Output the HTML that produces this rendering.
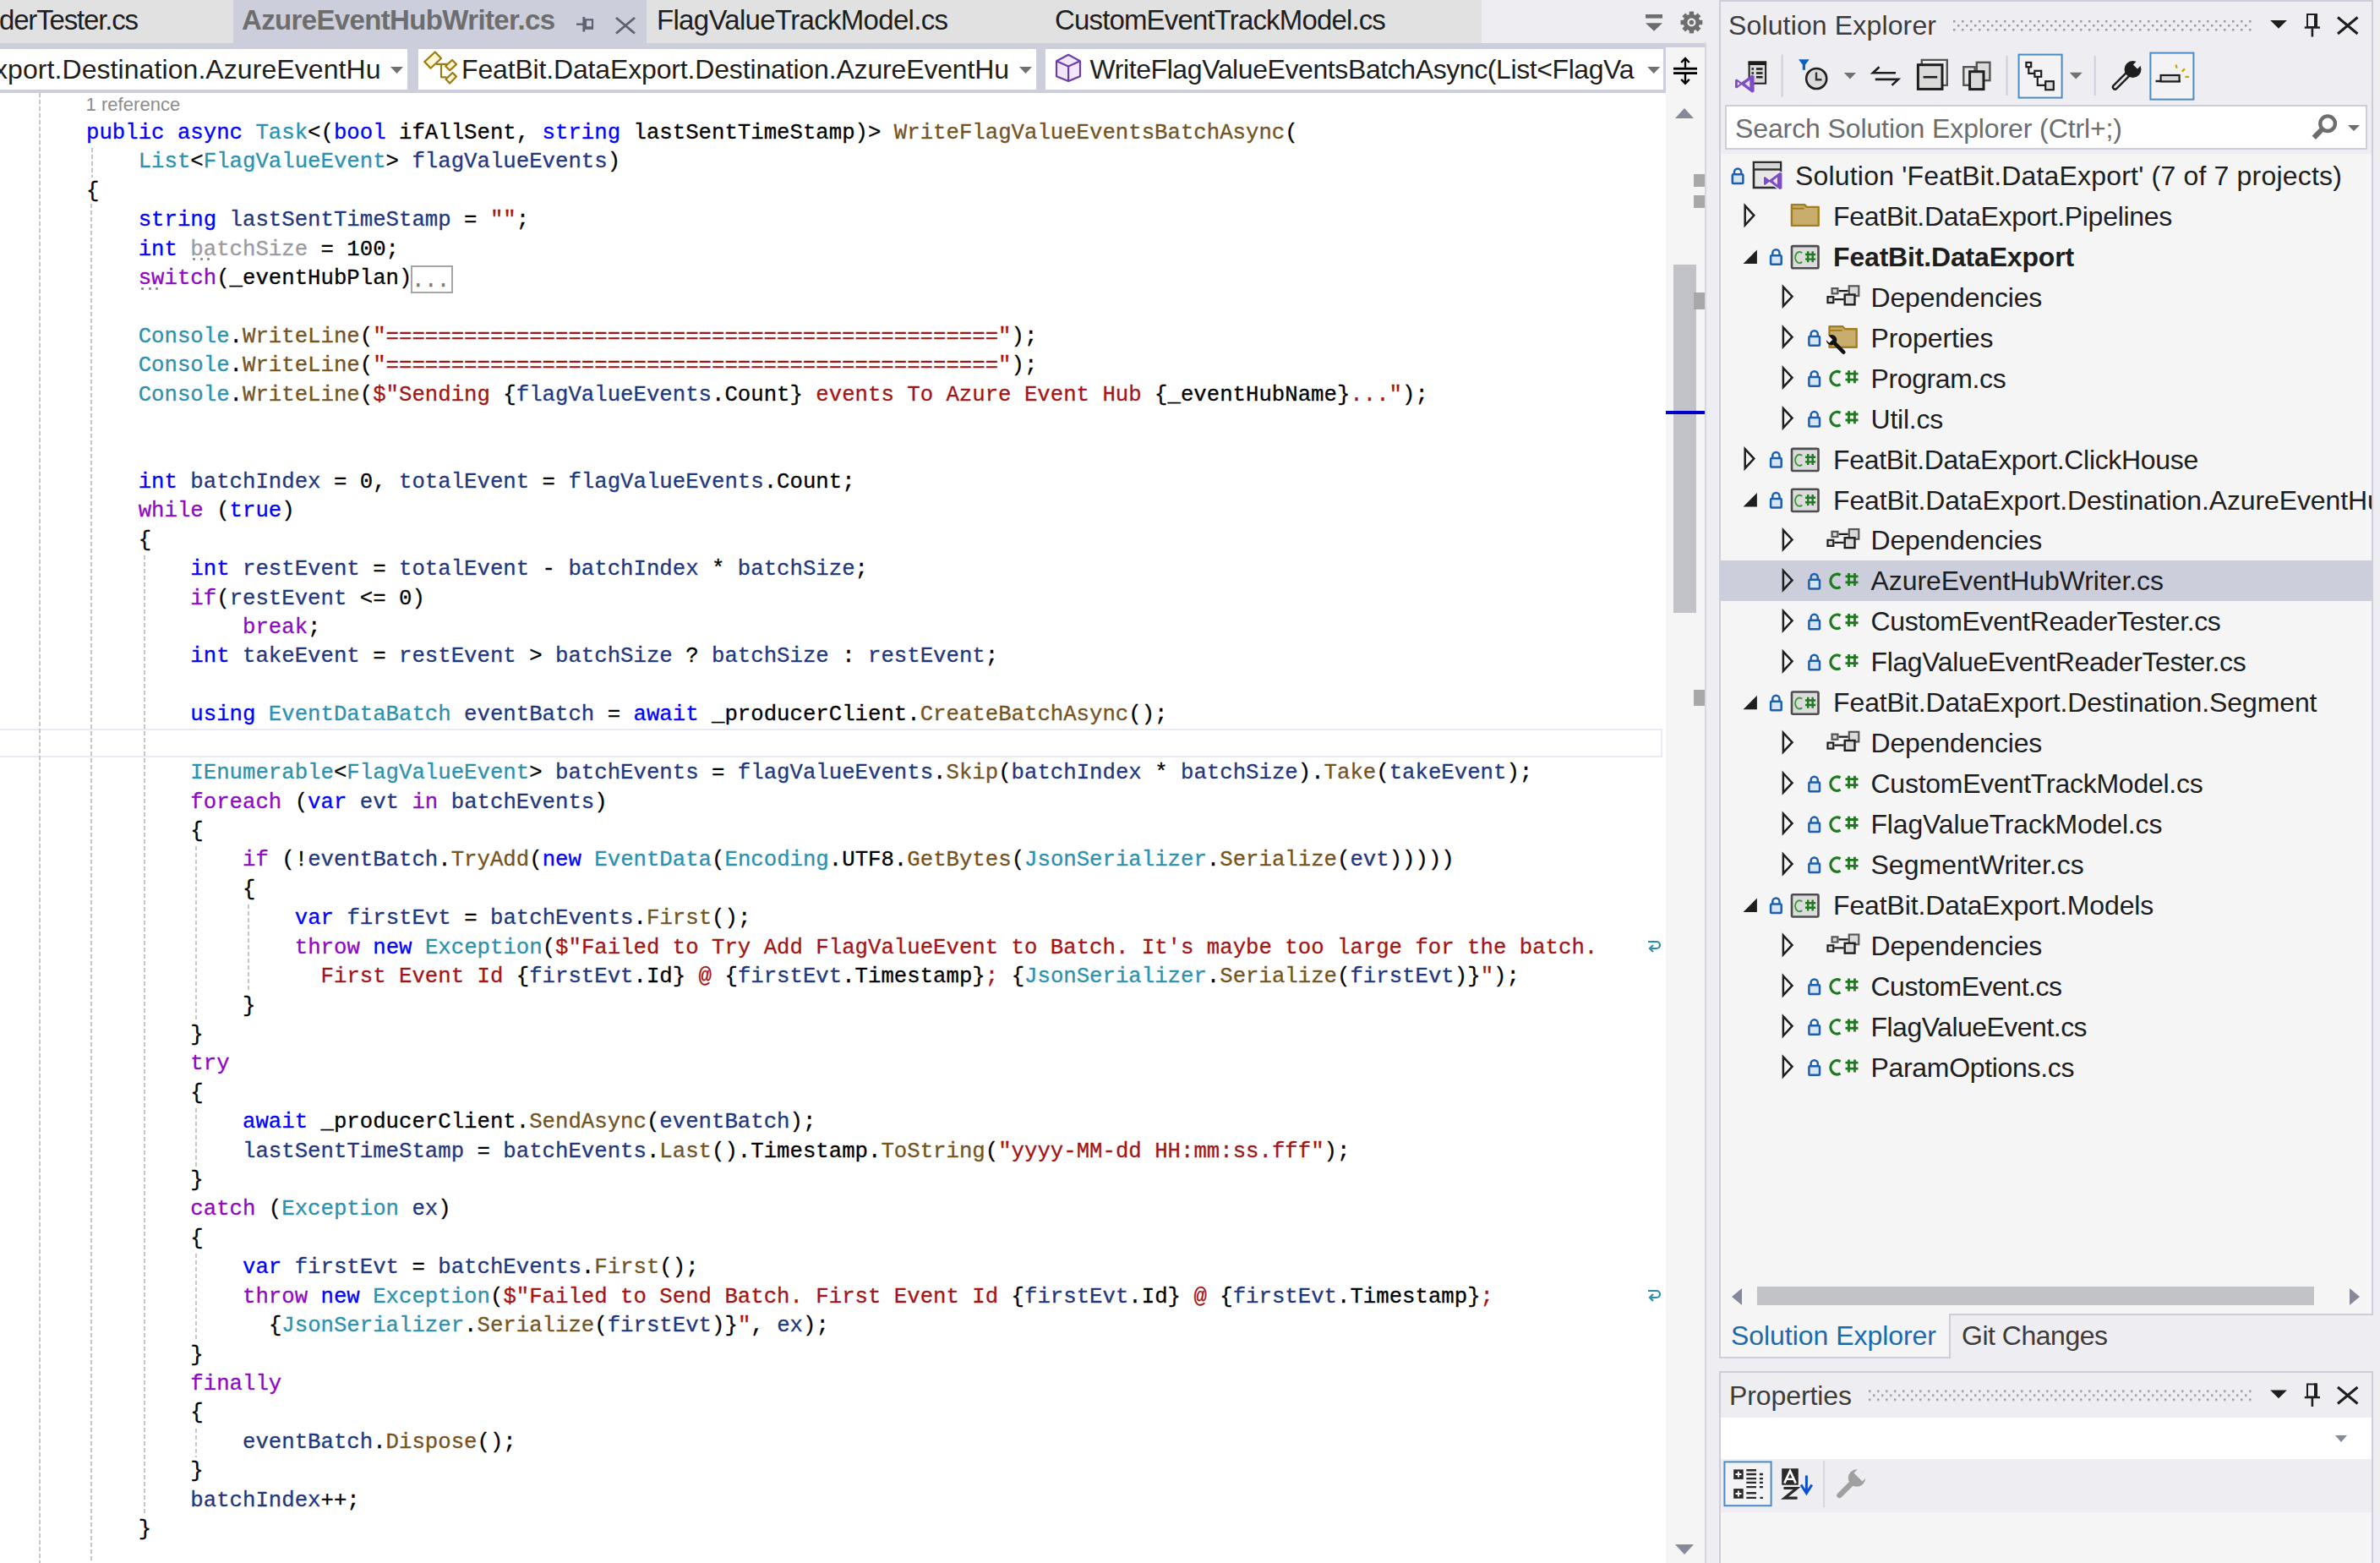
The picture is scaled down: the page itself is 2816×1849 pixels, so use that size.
<!DOCTYPE html><html><head><meta charset="utf-8"><style>
*{margin:0;padding:0;box-sizing:border-box}
html,body{width:2816px;height:1849px;overflow:hidden;background:#EEEEF2;font-family:"Liberation Sans",sans-serif;position:relative}
div,svg{position:absolute}
.t{white-space:pre;font-family:"Liberation Sans",sans-serif}
.code{font-family:"Liberation Mono",monospace;font-size:25.7px;line-height:34px;white-space:pre;-webkit-text-stroke:0.3px currentColor}
.k{color:#0000FF}.c{color:#8F08C4}.t2{color:#2B91AF}.m{color:#74531F}.v{color:#1F377F}.s{color:#A31515}.p{color:#000000}.g{color:#9A9AA2}
</style></head><body><div style="left:0px;top:0px;width:276px;height:50.5px;background:#E1E1E1;"></div>
<div style="left:276px;top:0px;width:489px;height:50.5px;background:#CCCEDB;"></div>
<div style="left:765px;top:0px;width:988px;height:50.5px;background:#E1E1E1;"></div>
<div style="left:0px;top:50.5px;width:2017px;height:59.5px;background:#CCCEDB;"></div>
<div class="t" style="left:-1px;top:3.66px;font-size:33px;line-height:40px;color:#1E1E1E;font-weight:normal;letter-spacing:-1.173px;">derTester.cs</div>
<div class="t" style="left:286px;top:3.66px;font-size:33px;line-height:40px;color:#6D6D6D;font-weight:bold;letter-spacing:-0.643px;">AzureEventHubWriter.cs</div>
<div class="t" style="left:777px;top:3.66px;font-size:33px;line-height:40px;color:#1E1E1E;font-weight:normal;letter-spacing:-0.689px;">FlagValueTrackModel.cs</div>
<div class="t" style="left:1248px;top:3.66px;font-size:33px;line-height:40px;color:#1E1E1E;font-weight:normal;letter-spacing:-0.85px;">CustomEventTrackModel.cs</div>
<div style="left:0px;top:57.5px;width:482px;height:48.5px;background:#FFFFFF;"></div>
<div style="left:495px;top:57.5px;width:731px;height:48.5px;background:#FFFFFF;"></div>
<div style="left:1237px;top:57.5px;width:731px;height:48.5px;background:#FFFFFF;"></div>
<div style="left:1971px;top:56px;width:46px;height:54px;background:#F5F5F5;"></div>
<div class="t" style="left:-7px;top:61.50px;font-size:32px;line-height:40px;color:#1E1E1E;font-weight:normal;letter-spacing:0.074px;">xport.Destination.AzureEventHu</div>
<div class="t" style="left:546px;top:61.50px;font-size:32px;line-height:40px;color:#1E1E1E;font-weight:normal;letter-spacing:-0.156px;">FeatBit.DataExport.Destination.AzureEventHu</div>
<div style="left:0;top:0;width:1934px;height:110px;overflow:hidden">
<div class="t" style="left:1289.5px;top:61.50px;font-size:32px;line-height:40px;color:#1E1E1E;font-weight:normal;letter-spacing:-0.409px;">WriteFlagValueEventsBatchAsync(List&lt;FlagVa</div>
</div>
<div style="left:0px;top:110px;width:1971px;height:1739px;background:#FFFFFF;"></div>
<div style="left:1971px;top:110px;width:46px;height:1739px;background:#F5F5F5;"></div>
<div style="left:2017px;top:50px;width:2px;height:1799px;background:#D6D7E0;"></div>
<div style="left:0px;top:862px;width:1967px;height:34px;border:2px solid #EAEAF2;border-left:none"></div>
<div class="code" style="left:102.00px;top:140.90px"><span class="k">public</span><span class="p"> </span><span class="k">async</span><span class="p"> </span><span class="t2">Task</span><span class="p">&lt;(</span><span class="k">bool</span><span class="p"> ifAllSent, </span><span class="k">string</span><span class="p"> lastSentTimeStamp)&gt; </span><span class="m">WriteFlagValueEventsBatchAsync</span><span class="p">(</span></div>
<div class="code" style="left:163.68px;top:175.32px"><span class="t2">List</span><span class="p">&lt;</span><span class="t2">FlagValueEvent</span><span class="p">&gt; </span><span class="v">flagValueEvents</span><span class="p">)</span></div>
<div class="code" style="left:102.00px;top:209.74px"><span class="p">{</span></div>
<div class="code" style="left:163.68px;top:244.16px"><span class="k">string</span><span class="p"> </span><span class="v">lastSentTimeStamp</span><span class="p"> = </span><span class="s">""</span><span class="p">;</span></div>
<div class="code" style="left:163.68px;top:278.58px"><span class="k">int</span><span class="p"> </span><span class="g">batchSize</span><span class="p"> = 100;</span></div>
<div class="code" style="left:163.68px;top:313.00px"><span class="c">switch</span><span class="p">(_eventHubPlan)</span></div>
<div class="code" style="left:163.68px;top:381.84px"><span class="t2">Console</span><span class="p">.</span><span class="m">WriteLine</span><span class="p">(</span><span class="s">"==============================================="</span><span class="p">);</span></div>
<div class="code" style="left:163.68px;top:416.26px"><span class="t2">Console</span><span class="p">.</span><span class="m">WriteLine</span><span class="p">(</span><span class="s">"==============================================="</span><span class="p">);</span></div>
<div class="code" style="left:163.68px;top:450.68px"><span class="t2">Console</span><span class="p">.</span><span class="m">WriteLine</span><span class="p">(</span><span class="s">$"Sending </span><span class="p">{</span><span class="v">flagValueEvents</span><span class="p">.Count}</span><span class="s"> events To Azure Event Hub </span><span class="p">{_eventHubName}</span><span class="s">..."</span><span class="p">);</span></div>
<div class="code" style="left:163.68px;top:553.94px"><span class="k">int</span><span class="p"> </span><span class="v">batchIndex</span><span class="p"> = 0, </span><span class="v">totalEvent</span><span class="p"> = </span><span class="v">flagValueEvents</span><span class="p">.Count;</span></div>
<div class="code" style="left:163.68px;top:588.36px"><span class="c">while</span><span class="p"> (</span><span class="k">true</span><span class="p">)</span></div>
<div class="code" style="left:163.68px;top:622.78px"><span class="p">{</span></div>
<div class="code" style="left:225.36px;top:657.20px"><span class="k">int</span><span class="p"> </span><span class="v">restEvent</span><span class="p"> = </span><span class="v">totalEvent</span><span class="p"> - </span><span class="v">batchIndex</span><span class="p"> * </span><span class="v">batchSize</span><span class="p">;</span></div>
<div class="code" style="left:225.36px;top:691.62px"><span class="c">if</span><span class="p">(</span><span class="v">restEvent</span><span class="p"> &lt;= 0)</span></div>
<div class="code" style="left:287.04px;top:726.04px"><span class="c">break</span><span class="p">;</span></div>
<div class="code" style="left:225.36px;top:760.46px"><span class="k">int</span><span class="p"> </span><span class="v">takeEvent</span><span class="p"> = </span><span class="v">restEvent</span><span class="p"> &gt; </span><span class="v">batchSize</span><span class="p"> ? </span><span class="v">batchSize</span><span class="p"> : </span><span class="v">restEvent</span><span class="p">;</span></div>
<div class="code" style="left:225.36px;top:829.30px"><span class="k">using</span><span class="p"> </span><span class="t2">EventDataBatch</span><span class="p"> </span><span class="v">eventBatch</span><span class="p"> = </span><span class="k">await</span><span class="p"> _producerClient.</span><span class="m">CreateBatchAsync</span><span class="p">();</span></div>
<div class="code" style="left:225.36px;top:898.14px"><span class="t2">IEnumerable</span><span class="p">&lt;</span><span class="t2">FlagValueEvent</span><span class="p">&gt; </span><span class="v">batchEvents</span><span class="p"> = </span><span class="v">flagValueEvents</span><span class="p">.</span><span class="m">Skip</span><span class="p">(</span><span class="v">batchIndex</span><span class="p"> * </span><span class="v">batchSize</span><span class="p">).</span><span class="m">Take</span><span class="p">(</span><span class="v">takeEvent</span><span class="p">);</span></div>
<div class="code" style="left:225.36px;top:932.56px"><span class="c">foreach</span><span class="p"> (</span><span class="k">var</span><span class="p"> </span><span class="v">evt</span><span class="p"> </span><span class="c">in</span><span class="p"> </span><span class="v">batchEvents</span><span class="p">)</span></div>
<div class="code" style="left:225.36px;top:966.98px"><span class="p">{</span></div>
<div class="code" style="left:287.04px;top:1001.40px"><span class="c">if</span><span class="p"> (!</span><span class="v">eventBatch</span><span class="p">.</span><span class="m">TryAdd</span><span class="p">(</span><span class="k">new</span><span class="p"> </span><span class="t2">EventData</span><span class="p">(</span><span class="t2">Encoding</span><span class="p">.UTF8.</span><span class="m">GetBytes</span><span class="p">(</span><span class="t2">JsonSerializer</span><span class="p">.</span><span class="m">Serialize</span><span class="p">(</span><span class="v">evt</span><span class="p">)))))</span></div>
<div class="code" style="left:287.04px;top:1035.82px"><span class="p">{</span></div>
<div class="code" style="left:348.72px;top:1070.24px"><span class="k">var</span><span class="p"> </span><span class="v">firstEvt</span><span class="p"> = </span><span class="v">batchEvents</span><span class="p">.</span><span class="m">First</span><span class="p">();</span></div>
<div class="code" style="left:348.72px;top:1104.66px"><span class="c">throw</span><span class="p"> </span><span class="k">new</span><span class="p"> </span><span class="t2">Exception</span><span class="p">(</span><span class="s">$"Failed to Try Add FlagValueEvent to Batch. It's maybe too large for the batch.</span></div>
<div class="code" style="left:379.56px;top:1139.08px"><span class="s">First Event Id </span><span class="p">{</span><span class="v">firstEvt</span><span class="p">.Id}</span><span class="s"> @ </span><span class="p">{</span><span class="v">firstEvt</span><span class="p">.Timestamp}</span><span class="s">; </span><span class="p">{</span><span class="t2">JsonSerializer</span><span class="p">.</span><span class="m">Serialize</span><span class="p">(</span><span class="v">firstEvt</span><span class="p">)}</span><span class="s">"</span><span class="p">);</span></div>
<div class="code" style="left:287.04px;top:1173.50px"><span class="p">}</span></div>
<div class="code" style="left:225.36px;top:1207.92px"><span class="p">}</span></div>
<div class="code" style="left:225.36px;top:1242.34px"><span class="c">try</span></div>
<div class="code" style="left:225.36px;top:1276.76px"><span class="p">{</span></div>
<div class="code" style="left:287.04px;top:1311.18px"><span class="k">await</span><span class="p"> _producerClient.</span><span class="m">SendAsync</span><span class="p">(</span><span class="v">eventBatch</span><span class="p">);</span></div>
<div class="code" style="left:287.04px;top:1345.60px"><span class="v">lastSentTimeStamp</span><span class="p"> = </span><span class="v">batchEvents</span><span class="p">.</span><span class="m">Last</span><span class="p">().Timestamp.</span><span class="m">ToString</span><span class="p">(</span><span class="s">"yyyy-MM-dd HH:mm:ss.fff"</span><span class="p">);</span></div>
<div class="code" style="left:225.36px;top:1380.02px"><span class="p">}</span></div>
<div class="code" style="left:225.36px;top:1414.44px"><span class="c">catch</span><span class="p"> (</span><span class="t2">Exception</span><span class="p"> </span><span class="v">ex</span><span class="p">)</span></div>
<div class="code" style="left:225.36px;top:1448.86px"><span class="p">{</span></div>
<div class="code" style="left:287.04px;top:1483.28px"><span class="k">var</span><span class="p"> </span><span class="v">firstEvt</span><span class="p"> = </span><span class="v">batchEvents</span><span class="p">.</span><span class="m">First</span><span class="p">();</span></div>
<div class="code" style="left:287.04px;top:1517.70px"><span class="c">throw</span><span class="p"> </span><span class="k">new</span><span class="p"> </span><span class="t2">Exception</span><span class="p">(</span><span class="s">$"Failed to Send Batch. First Event Id </span><span class="p">{</span><span class="v">firstEvt</span><span class="p">.Id}</span><span class="s"> @ </span><span class="p">{</span><span class="v">firstEvt</span><span class="p">.Timestamp}</span><span class="s">;</span></div>
<div class="code" style="left:317.88px;top:1552.12px"><span class="p">{</span><span class="t2">JsonSerializer</span><span class="p">.</span><span class="m">Serialize</span><span class="p">(</span><span class="v">firstEvt</span><span class="p">)}</span><span class="s">"</span><span class="p">, </span><span class="v">ex</span><span class="p">);</span></div>
<div class="code" style="left:225.36px;top:1586.54px"><span class="p">}</span></div>
<div class="code" style="left:225.36px;top:1620.96px"><span class="c">finally</span></div>
<div class="code" style="left:225.36px;top:1655.38px"><span class="p">{</span></div>
<div class="code" style="left:287.04px;top:1689.80px"><span class="v">eventBatch</span><span class="p">.</span><span class="m">Dispose</span><span class="p">();</span></div>
<div class="code" style="left:225.36px;top:1724.22px"><span class="p">}</span></div>
<div class="code" style="left:225.36px;top:1758.64px"><span class="v">batchIndex</span><span class="p">++;</span></div>
<div class="code" style="left:163.68px;top:1793.06px"><span class="p">}</span></div>
<div class="t" style="left:101.5px;top:104.44px;font-size:22px;line-height:40px;color:#8C8C8C;font-weight:normal;letter-spacing:0.05px;">1 reference</div>
<div style="left:46px;top:110px;width:2px;height:1739px;background:repeating-linear-gradient(to bottom,#C6C6C6 0 5px,transparent 5px 8px)"></div>
<div style="left:108.0px;top:175.1px;width:2px;height:34.6px;background:repeating-linear-gradient(to bottom,#C6C6C6 0 5px,transparent 5px 8px)"></div>
<div style="left:107px;top:241px;width:2px;height:1608px;background:repeating-linear-gradient(to bottom,#C6C6C6 0 5px,transparent 5px 8px)"></div>
<div style="left:169.7px;top:657.0px;width:2px;height:1136.1px;background:repeating-linear-gradient(to bottom,#C6C6C6 0 5px,transparent 5px 8px)"></div>
<div style="left:231.4px;top:1001.2px;width:2px;height:206.7px;background:repeating-linear-gradient(to bottom,#C6C6C6 0 5px,transparent 5px 8px)"></div>
<div style="left:231.4px;top:1311.0px;width:2px;height:69.0px;background:repeating-linear-gradient(to bottom,#C6C6C6 0 5px,transparent 5px 8px)"></div>
<div style="left:231.4px;top:1483.1px;width:2px;height:103.5px;background:repeating-linear-gradient(to bottom,#C6C6C6 0 5px,transparent 5px 8px)"></div>
<div style="left:231.4px;top:1689.6px;width:2px;height:34.6px;background:repeating-linear-gradient(to bottom,#C6C6C6 0 5px,transparent 5px 8px)"></div>
<div style="left:293.0px;top:1070.0px;width:2px;height:103.5px;background:repeating-linear-gradient(to bottom,#C6C6C6 0 5px,transparent 5px 8px)"></div>
<div style="left:486px;top:314px;width:50px;height:33px;border:2px solid #A5A5A5;"></div>
<div class="code" style="left:487px;top:316px;color:#7A7A7A;letter-spacing:-0.5px">...</div>
<div style="left:228px;top:305px;width:3px;height:3px;background:#8C8C8C;border-radius:1px"></div>
<div style="left:236.5px;top:305px;width:3px;height:3px;background:#8C8C8C;border-radius:1px"></div>
<div style="left:245px;top:305px;width:3px;height:3px;background:#8C8C8C;border-radius:1px"></div>
<div style="left:167px;top:339.5px;width:3px;height:3px;background:#8C8C8C;border-radius:1px"></div>
<div style="left:175.5px;top:339.5px;width:3px;height:3px;background:#8C8C8C;border-radius:1px"></div>
<div style="left:184px;top:339.5px;width:3px;height:3px;background:#8C8C8C;border-radius:1px"></div>
<div style="left:1947px;top:1109.7px;width:20px;height:18px"><svg width="20" height="18" viewBox="0 0 20 18"><path d="M3 4 H13 a4 4 0 0 1 0 8 H7" fill="none" stroke="#2B8DAA" stroke-width="2.2"/><path d="M9 8 L5 12 L9 16" fill="none" stroke="#2B8DAA" stroke-width="2.2"/></svg></div>
<div style="left:1947px;top:1522.7px;width:20px;height:18px"><svg width="20" height="18" viewBox="0 0 20 18"><path d="M3 4 H13 a4 4 0 0 1 0 8 H7" fill="none" stroke="#2B8DAA" stroke-width="2.2"/><path d="M9 8 L5 12 L9 16" fill="none" stroke="#2B8DAA" stroke-width="2.2"/></svg></div>
<svg style="left:1981px;top:125px" width="24" height="16" viewBox="0 0 24 16"><path d="M1 15 L12 3 L23 15 Z" fill="#868999"/></svg>
<svg style="left:1981px;top:1826px" width="24" height="16" viewBox="0 0 24 16"><path d="M1 1 L12 13 L23 1 Z" fill="#868999"/></svg>
<div style="left:1980px;top:313px;width:27px;height:412px;background:#C2C3C9;"></div>
<div style="left:2003.5px;top:206px;width:13px;height:15px;background:#A8A8A8;"></div>
<div style="left:2003.5px;top:231px;width:13px;height:15px;background:#A8A8A8;"></div>
<div style="left:2003.5px;top:346px;width:13px;height:20px;background:#A8A8A8;"></div>
<div style="left:2003.5px;top:816px;width:13px;height:19px;background:#A8A8A8;"></div>
<div style="left:1971px;top:486px;width:46px;height:4px;background:#0000C8;"></div>
<div style="left:2034px;top:0px;width:774px;height:1556px;background:#CCCEDB;"></div>
<div style="left:2036px;top:2px;width:770px;height:1552px;background:#EEEEF2;"></div>
<div style="left:2036px;top:182px;width:770px;height:1372px;background:#F5F5F5;"></div>
<div class="t" style="left:2045px;top:10.00px;font-size:32px;line-height:40px;color:#3C3C3C;font-weight:normal;letter-spacing:0.144px;">Solution Explorer</div>
<div style="left:2041px;top:124px;width:760px;height:53px;background:#CCCEDB;"></div>
<div style="left:2043px;top:126px;width:756px;height:49px;background:#FFFFFF;"></div>
<div class="t" style="left:2053px;top:131.50px;font-size:32px;line-height:40px;color:#6D6D6D;font-weight:normal;letter-spacing:-0.11px;">Search Solution Explorer (Ctrl+;)</div>
<div style="left:2036px;top:663.0px;width:770px;height:48px;background:#CCCEDB;"></div>
<div style="left:2036px;top:182px;width:770px;height:1330px;overflow:hidden">
<div class="t" style="left:88px;top:5.90px;font-size:32px;line-height:40px;color:#1E1E1E;font-weight:normal;letter-spacing:0.185px;">Solution 'FeatBit.DataExport' (7 of 7 projects)</div>
<div class="t" style="left:133px;top:53.85px;font-size:32px;line-height:40px;color:#1E1E1E;font-weight:normal;letter-spacing:-0.289px;">FeatBit.DataExport.Pipelines</div>
<div class="t" style="left:133px;top:101.80px;font-size:32px;line-height:40px;color:#1E1E1E;font-weight:bold;letter-spacing:-0.169px;">FeatBit.DataExport</div>
<div class="t" style="left:177.5px;top:149.75px;font-size:32px;line-height:40px;color:#1E1E1E;font-weight:normal;letter-spacing:-0.158px;">Dependencies</div>
<div class="t" style="left:177.5px;top:197.70px;font-size:32px;line-height:40px;color:#1E1E1E;font-weight:normal;letter-spacing:-0.084px;">Properties</div>
<div class="t" style="left:177.5px;top:245.65px;font-size:32px;line-height:40px;color:#1E1E1E;font-weight:normal;letter-spacing:-0.379px;">Program.cs</div>
<div class="t" style="left:177.5px;top:293.60px;font-size:32px;line-height:40px;color:#1E1E1E;font-weight:normal;letter-spacing:-0.23px;">Util.cs</div>
<div class="t" style="left:133px;top:341.55px;font-size:32px;line-height:40px;color:#1E1E1E;font-weight:normal;letter-spacing:-0.313px;">FeatBit.DataExport.ClickHouse</div>
<div class="t" style="left:133px;top:389.50px;font-size:32px;line-height:40px;color:#1E1E1E;font-weight:normal;letter-spacing:-0.115px;">FeatBit.DataExport.Destination.AzureEventHub</div>
<div class="t" style="left:177.5px;top:437.45px;font-size:32px;line-height:40px;color:#1E1E1E;font-weight:normal;letter-spacing:-0.158px;">Dependencies</div>
<div class="t" style="left:177.5px;top:485.40px;font-size:32px;line-height:40px;color:#1E1E1E;font-weight:normal;letter-spacing:-0.072px;">AzureEventHubWriter.cs</div>
<div class="t" style="left:177.5px;top:533.35px;font-size:32px;line-height:40px;color:#1E1E1E;font-weight:normal;letter-spacing:-0.358px;">CustomEventReaderTester.cs</div>
<div class="t" style="left:177.5px;top:581.30px;font-size:32px;line-height:40px;color:#1E1E1E;font-weight:normal;letter-spacing:-0.378px;">FlagValueEventReaderTester.cs</div>
<div class="t" style="left:133px;top:629.25px;font-size:32px;line-height:40px;color:#1E1E1E;font-weight:normal;letter-spacing:-0.103px;">FeatBit.DataExport.Destination.Segment</div>
<div class="t" style="left:177.5px;top:677.20px;font-size:32px;line-height:40px;color:#1E1E1E;font-weight:normal;letter-spacing:-0.158px;">Dependencies</div>
<div class="t" style="left:177.5px;top:725.15px;font-size:32px;line-height:40px;color:#1E1E1E;font-weight:normal;letter-spacing:-0.247px;">CustomEventTrackModel.cs</div>
<div class="t" style="left:177.5px;top:773.10px;font-size:32px;line-height:40px;color:#1E1E1E;font-weight:normal;letter-spacing:-0.176px;">FlagValueTrackModel.cs</div>
<div class="t" style="left:177.5px;top:821.05px;font-size:32px;line-height:40px;color:#1E1E1E;font-weight:normal;letter-spacing:0.023px;">SegmentWriter.cs</div>
<div class="t" style="left:133px;top:869.00px;font-size:32px;line-height:40px;color:#1E1E1E;font-weight:normal;letter-spacing:-0.128px;">FeatBit.DataExport.Models</div>
<div class="t" style="left:177.5px;top:916.95px;font-size:32px;line-height:40px;color:#1E1E1E;font-weight:normal;letter-spacing:-0.158px;">Dependencies</div>
<div class="t" style="left:177.5px;top:964.90px;font-size:32px;line-height:40px;color:#1E1E1E;font-weight:normal;letter-spacing:-0.505px;">CustomEvent.cs</div>
<div class="t" style="left:177.5px;top:1012.85px;font-size:32px;line-height:40px;color:#1E1E1E;font-weight:normal;letter-spacing:-0.52px;">FlagValueEvent.cs</div>
<div class="t" style="left:177.5px;top:1060.80px;font-size:32px;line-height:40px;color:#1E1E1E;font-weight:normal;letter-spacing:-0.315px;">ParamOptions.cs</div>
</div>
<svg style="left:2047px;top:1523px" width="16" height="22" viewBox="0 0 16 22"><path d="M14 1 L2 11 L14 21 Z" fill="#868999"/></svg>
<svg style="left:2778px;top:1523px" width="16" height="22" viewBox="0 0 16 22"><path d="M2 1 L14 11 L2 21 Z" fill="#868999"/></svg>
<div style="left:2079px;top:1522px;width:659px;height:22px;background:#C2C3C9;"></div>
<div style="left:2034px;top:1554px;width:274px;height:53px;background:#CCCEDB;"></div>
<div style="left:2036px;top:1554px;width:270px;height:51px;background:#F5F5F5;"></div>
<div class="t" style="left:2048px;top:1559.50px;font-size:32px;line-height:40px;color:#1B6AB0;font-weight:normal;letter-spacing:-0.043px;">Solution Explorer</div>
<div class="t" style="left:2321px;top:1559.50px;font-size:32px;line-height:40px;color:#3C3C3C;font-weight:normal;letter-spacing:-0.488px;">Git Changes</div>
<div style="left:2034px;top:1622px;width:774px;height:227px;background:#CCCEDB;"></div>
<div style="left:2036px;top:1624px;width:770px;height:225px;background:#EEEEF2;"></div>
<div class="t" style="left:2046px;top:1630.50px;font-size:32px;line-height:40px;color:#3C3C3C;font-weight:normal;letter-spacing:-0.094px;">Properties</div>
<div style="left:2036px;top:1677px;width:770px;height:49px;background:#FFFFFF;"></div>
<svg style="left:2762px;top:1697px" width="16" height="10" viewBox="0 0 16 10"><path d="M1 1 L8 9 L15 1 Z" fill="#868999"/></svg>
<div style="left:2036px;top:1789px;width:770px;height:60px;background:#F5F5F5;"></div>
<svg style="left:0;top:0;position:absolute" width="2816" height="1849" viewBox="0 0 2816 1849"><g fill="none" stroke="#5F6270" stroke-width="2.4"><path d="M682 28.7 H691"/><path d="M690.8 20 V37.5" stroke-width="2.8"/><rect x="693" y="23.3" width="8" height="10.5" stroke-width="2.2"/><path d="M692 32.6 H702" stroke-width="2.6"/><path d="M729 21 L751 39.5 M751 21 L729 39.5" stroke-width="2.9"/></g><rect x="1947" y="17" width="20" height="4.6" fill="#6D6D6D"/><path d="M1947 27.2 H1967 L1957 36.8 Z" fill="#6D6D6D"/><g transform="translate(2001.4 26.5)" fill="#6D6D6D"><circle r="9.8"/><rect x="-2.7" y="-12.9" width="5.4" height="6" transform="rotate(0)"/><rect x="-2.7" y="-12.9" width="5.4" height="6" transform="rotate(45)"/><rect x="-2.7" y="-12.9" width="5.4" height="6" transform="rotate(90)"/><rect x="-2.7" y="-12.9" width="5.4" height="6" transform="rotate(135)"/><rect x="-2.7" y="-12.9" width="5.4" height="6" transform="rotate(180)"/><rect x="-2.7" y="-12.9" width="5.4" height="6" transform="rotate(225)"/><rect x="-2.7" y="-12.9" width="5.4" height="6" transform="rotate(270)"/><rect x="-2.7" y="-12.9" width="5.4" height="6" transform="rotate(315)"/><circle r="5" fill="#EEEEF2"/><circle r="2.8"/></g><path d="M462 79 H477 L469.5 87 Z" fill="#717171"/><path d="M1206 79 H1221 L1213.5 87 Z" fill="#717171"/><path d="M1949.2 79 H1964.2 L1956.7 87 Z" fill="#717171"/><g fill="#FFF6D5" stroke="#9C7C12" stroke-width="2.2" stroke-linejoin="round"><path d="M514.8 61.5 L522 69 L509.5 80.7 L502.3 73 Z"/><path d="M535 71 L540 76.1 L532.2 83.3 L527.1 78.2 Z"/><path d="M535.4 86 L540 90.6 L532.2 98.6 L527.5 93.8 Z"/><path d="M516 75.8 H529 M522 76 V91.3 H528.5" fill="none"/></g><g fill="#F3E6FF" stroke="#6B3FA8" stroke-width="2.2" stroke-linejoin="round"><path d="M1264.1 64.8 L1278 72.2 V90.2 L1264.1 96 L1250 90.2 V72.2 Z"/><path d="M1250 72.2 L1264.1 78.4 L1278 72.2 M1264.1 78.4 V96" fill="none"/></g><g fill="#000"><rect x="1980" y="79.8" width="28" height="2.8"/><rect x="1980" y="85.2" width="28" height="2.8"/></g><g fill="none" stroke="#000" stroke-width="2.4"><path d="M1994 69 V79.8 M1989.2 74 L1994 69 L1998.8 74"/><path d="M1994 88 V98.8 M1989.2 93.8 L1994 98.8 L1998.8 93.8"/></g><g transform="translate(0 0)"><path d="M2686.2 23.9 H2705.9 L2696 33.7 Z" fill="#1E1E1E"/><rect x="2730" y="17" width="10.5" height="15" fill="none" stroke="#1E1E1E" stroke-width="2"/><rect x="2738" y="16" width="4" height="16" fill="#1E1E1E"/><rect x="2726.8" y="31.4" width="18.2" height="2.4" fill="#1E1E1E"/><rect x="2734.6" y="33.5" width="2.6" height="10" fill="#1E1E1E"/><path d="M2766 20.5 L2789.5 40 M2789.5 20.5 L2766 40" stroke="#1E1E1E" stroke-width="3"/></g><g transform="translate(0 1620.5)"><path d="M2686.2 23.9 H2705.9 L2696 33.7 Z" fill="#1E1E1E"/><rect x="2730" y="17" width="10.5" height="15" fill="none" stroke="#1E1E1E" stroke-width="2"/><rect x="2738" y="16" width="4" height="16" fill="#1E1E1E"/><rect x="2726.8" y="31.4" width="18.2" height="2.4" fill="#1E1E1E"/><rect x="2734.6" y="33.5" width="2.6" height="10" fill="#1E1E1E"/><path d="M2766 20.5 L2789.5 40 M2789.5 20.5 L2766 40" stroke="#1E1E1E" stroke-width="3"/></g><defs><pattern id="grip" x="2311" y="24" width="10" height="10" patternUnits="userSpaceOnUse"><rect x="0" y="0" width="2.5" height="2.5" fill="#9A9AA2"/><rect x="5" y="5" width="2.5" height="2.5" fill="#9A9AA2"/></pattern><pattern id="grip2" x="2211" y="1644.5" width="10" height="10" patternUnits="userSpaceOnUse"><rect x="0" y="0" width="2.5" height="2.5" fill="#9A9AA2"/><rect x="5" y="5" width="2.5" height="2.5" fill="#9A9AA2"/></pattern></defs><rect x="2310" y="23.5" width="356" height="14" fill="url(#grip)"/><rect x="2210" y="1644" width="455" height="14" fill="url(#grip2)"/><rect x="2069.6" y="73.5" width="19.5" height="25.2" fill="#DADADA" stroke="#1E1E1E" stroke-width="2"/><rect x="2068.6" y="72.5" width="21.5" height="4.5" fill="#1E1E1E"/><g stroke="#1E1E1E" stroke-width="2.6"><path d="M2072.5 81.5 H2075 M2072.5 86.5 H2075 M2078 81.5 H2085.5 M2078 86.5 H2085.5 M2078 91.2 H2085.5"/></g><path d="M2073.2 88.5 L2075.6 90 V108.3 L2073.2 109.8 L2060.5 100.3 L2055 104.5 L2053 103.4 V94.6 L2055 93.6 L2060.5 97.6 Z" fill="#7C4DC4"/><path d="M2070.3 94.8 V103.4 L2064.5 99 Z" fill="#EADFF8"/><path d="M2055.8 96.6 V101.4 L2058.8 99 Z" fill="#EADFF8"/><rect x="2107.6" y="64.5" width="2" height="50.0" fill="#CCCEDB"/><rect x="2373.5" y="66" width="2" height="47" fill="#CCCEDB"/><rect x="2477.7" y="66" width="2" height="47" fill="#CCCEDB"/><path d="M2128 70.2 H2140.8 L2136 76.6 V82.8 H2132.8 V76.6 Z" fill="#0B62C4"/><circle cx="2149.2" cy="93" r="12" fill="#DADADA" stroke="#1E1E1E" stroke-width="2.6"/><path d="M2149 85.5 V94.2 H2155.5" fill="none" stroke="#333" stroke-width="2.4"/><path d="M2181.8 86 H2196 L2189 93.4 Z" fill="#717171"/><g fill="none" stroke="#1E1E1E" stroke-width="2.6"><path d="M2243 86.3 H2216 L2223.5 79.3"/><path d="M2218.8 93.9 H2246 L2238.5 100.9"/></g><path d="M2273.8 76 V70.9 H2303.8 V100.9 H2298.5" fill="none" stroke="#555" stroke-width="2.4"/><rect x="2269.4" y="76.7" width="28.6" height="28.7" fill="#DADADA" stroke="#1E1E1E" stroke-width="3"/><path d="M2275.6 91.2 H2292.2" stroke="#1E1E1E" stroke-width="2.6"/><rect x="2338.8" y="73.8" width="15.6" height="21.4" fill="#DADADA" stroke="#555" stroke-width="2.4"/><rect x="2323.3" y="79.2" width="13.3" height="21.6" fill="#E6E6E6" stroke="#555" stroke-width="2.4"/><rect x="2330.6" y="84.7" width="16.4" height="20.9" fill="#DADADA" stroke="#1E1E1E" stroke-width="3"/><rect x="2388.6" y="64.6" width="51" height="51" fill="#F3F3F6" stroke="#4A8AC8" stroke-width="2"/><g fill="none" stroke="#1E1E1E" stroke-width="2.2"><rect x="2397.4" y="73.9" width="5.8" height="5.3"/><path d="M2400.3 79.2 V86.8 H2407"/><rect x="2407.4" y="83.8" width="7.8" height="7"/><path d="M2410.8 90.8 V100.8 H2420"/><rect x="2420.2" y="96.2" width="9.6" height="10" fill="#DADADA"/></g><path d="M2448.7 85.8 H2463.8 L2456.2 93.4 Z" fill="#717171"/><path d="M2502.5 103 L2517 88.5" stroke="#1E1E1E" stroke-width="7.5" stroke-linecap="round"/><path d="M2502.5 103 L2517 88.5" stroke="#E4E4E8" stroke-width="2.8" stroke-linecap="round"/><circle cx="2523.5" cy="82" r="10" fill="#1E1E1E"/><rect x="-3.6" y="-7" width="7.2" height="12" fill="#EEEEF2" transform="translate(2530 75.5) rotate(45)"/><rect x="2544.4" y="62.6" width="51" height="55" fill="#F3F3F6" stroke="#4A8AC8" stroke-width="2"/><path d="M2550.5 96 H2580" stroke="#1E1E1E" stroke-width="2.4"/><rect x="2556.6" y="89" width="22" height="7.4" fill="#DADADA" stroke="#1E1E1E" stroke-width="2.2"/><g stroke="#C9A400" stroke-width="2.2"><path d="M2574.6 76.5 L2575.6 80.8 M2581.8 84.6 L2585 81.4 M2585.4 90.8 H2590"/></g><circle cx="2754.1" cy="146.2" r="8.8" fill="none" stroke="#6D6D6D" stroke-width="4.4"/><path d="M2748.2 152.2 L2737.8 162.8" stroke="#6D6D6D" stroke-width="6.2"/><path d="M2778 148.1 H2792.1 L2785 155 Z" fill="#6D6D6D"/><path d="M2052.0 206.9 V203.5 a4.1 4.1 0 0 1 8.2 0 V206.9" fill="none" stroke="#1C5FAF" stroke-width="2.5"/><rect x="2049.7999999999997" y="206.3" width="12.6" height="10.6" rx="1" fill="#D6E6F6" stroke="#1C5FAF" stroke-width="2.5"/><rect x="2075" y="192" width="32" height="30" fill="#E6E6E6" stroke="#2D2D2D" stroke-width="2.6"/><rect x="2076" y="193" width="30" height="7" fill="#D4D4D4"/><path d="M2075 200.5 H2107" stroke="#2D2D2D" stroke-width="2.4"/><path d="M2106 203 L2109 204.8 V223.2 L2106 225 L2093.5 215.8 L2088.5 219.8 L2086.3 218.7 V209.3 L2088.5 208.2 L2093.5 212.2 Z" fill="#7C4DC4" stroke="#F5F5F5" stroke-width="1.2"/><path d="M2103 209.5 V218.5 L2097.5 214 Z" fill="#EADFF8"/><path d="M2064.7 243.45000000000002 L2075.3 254.85000000000002 L2064.7 266.25 Z" fill="none" stroke="#1E1E1E" stroke-width="2.5" stroke-linejoin="miter"/><path d="M2119.8999999999996 242.15000000000003 H2135.2 L2137.7 244.85000000000002 H2151.7 V266.85 H2119.8999999999996 Z" fill="#C9AD6C" stroke="#A47E1E" stroke-width="2.4" stroke-linejoin="round"/><path d="M2120.2 246.65000000000003 H2134.7" stroke="#A47E1E" stroke-width="2"/><path d="M2078.9 295.40000000000003 V311.90000000000003 H2062.6 Z" fill="#1E1E1E"/><path d="M2097.3 302.8 V299.40000000000003 a4.1 4.1 0 0 1 8.2 0 V302.8" fill="none" stroke="#1C5FAF" stroke-width="2.5"/><rect x="2095.1" y="302.2" width="12.6" height="10.6" rx="1" fill="#D6E6F6" stroke="#1C5FAF" stroke-width="2.5"/><rect x="2120.0" y="291.1" width="31.5" height="26.2" rx="1.5" fill="#DCDCDC" stroke="#4D4D4D" stroke-width="2.6"/><path d="M2132.2 299.3 A5 6.6 0 1 0 2132.2 309.8" fill="none" stroke="#3C9A3C" stroke-width="2"/><g stroke="#1F7A1F" stroke-width="2.4"><path d="M2139.2 297.3 V310.3 M2144.7 297.3 V310.3 M2136.0 301.0 H2148.2 M2136.0 306.6 H2148.2"/></g><path d="M2109.8999999999996 339.35 L2120.5 350.75 L2109.8999999999996 362.15 Z" fill="none" stroke="#1E1E1E" stroke-width="2.5" stroke-linejoin="miter"/><g fill="#DADADA" stroke-width="2.2"><path d="M2175.5 344.2 H2186.7000000000003 M2170.4 354.1 H2181.6" stroke="#1E1E1E"/><rect x="2167.6" y="341.15" width="6.8" height="6.2" stroke="#555"/><rect x="2187.8" y="338.35" width="11.5" height="11.7" stroke="#555"/><rect x="2162.5" y="351.15" width="6.8" height="7" stroke="#1E1E1E"/><rect x="2182.7000000000003" y="348.55" width="11.8" height="11.8" stroke="#1E1E1E" stroke-width="2.4"/></g><path d="M2109.8999999999996 387.30000000000007 L2120.5 398.70000000000005 L2109.8999999999996 410.1 Z" fill="none" stroke="#1E1E1E" stroke-width="2.5" stroke-linejoin="miter"/><path d="M2142.6 398.70000000000005 V395.30000000000007 a4.1 4.1 0 0 1 8.2 0 V398.70000000000005" fill="none" stroke="#1C5FAF" stroke-width="2.5"/><rect x="2140.3999999999996" y="398.1" width="12.6" height="10.6" rx="1" fill="#D6E6F6" stroke="#1C5FAF" stroke-width="2.5"/><path d="M2164.5 386.20000000000005 H2180.3 L2182.8 389.20000000000005 H2196.7000000000003 V410.70000000000005 H2164.5 Z" fill="#C9AD6C" stroke="#A47E1E" stroke-width="2.4" stroke-linejoin="round"/><path d="M2164.8 390.90000000000003 H2179.8" stroke="#A47E1E" stroke-width="2"/><path d="M2168.3 403.70000000000005 L2181.3 416.70000000000005" stroke="#111" stroke-width="4.6" stroke-linecap="round"/><circle cx="2167.1000000000004" cy="402.20000000000005" r="6.2" fill="#111"/><path d="M2162.3 395.70000000000005 L2168.3 401.70000000000005 L2164.3 405.70000000000005 L2158.3 399.70000000000005 Z" fill="#F5F5F5"/><path d="M2109.8999999999996 435.25 L2120.5 446.65 L2109.8999999999996 458.04999999999995 Z" fill="none" stroke="#1E1E1E" stroke-width="2.5" stroke-linejoin="miter"/><path d="M2142.6 446.65 V443.25 a4.1 4.1 0 0 1 8.2 0 V446.65" fill="none" stroke="#1C5FAF" stroke-width="2.5"/><rect x="2140.3999999999996" y="446.04999999999995" width="12.6" height="10.6" rx="1" fill="#D6E6F6" stroke="#1C5FAF" stroke-width="2.5"/><path d="M2177.5 440.65 A7.6 8.2 0 1 0 2177.5 454.65" fill="none" stroke="#1F7A1F" stroke-width="3.3"/><g stroke="#1F7A1F" stroke-width="2.8"><path d="M2187.5 438.25 V453.25 M2194.5 438.25 V453.25 M2183.5 442.04999999999995 H2198.5 M2183.5 449.04999999999995 H2198.5"/></g><path d="M2109.8999999999996 483.20000000000005 L2120.5 494.6 L2109.8999999999996 506.0 Z" fill="none" stroke="#1E1E1E" stroke-width="2.5" stroke-linejoin="miter"/><path d="M2142.6 494.6 V491.20000000000005 a4.1 4.1 0 0 1 8.2 0 V494.6" fill="none" stroke="#1C5FAF" stroke-width="2.5"/><rect x="2140.3999999999996" y="494.0" width="12.6" height="10.6" rx="1" fill="#D6E6F6" stroke="#1C5FAF" stroke-width="2.5"/><path d="M2177.5 488.6 A7.6 8.2 0 1 0 2177.5 502.6" fill="none" stroke="#1F7A1F" stroke-width="3.3"/><g stroke="#1F7A1F" stroke-width="2.8"><path d="M2187.5 486.20000000000005 V501.20000000000005 M2194.5 486.20000000000005 V501.20000000000005 M2183.5 490.0 H2198.5 M2183.5 497.0 H2198.5"/></g><path d="M2064.7 531.1500000000001 L2075.3 542.5500000000001 L2064.7 553.95 Z" fill="none" stroke="#1E1E1E" stroke-width="2.5" stroke-linejoin="miter"/><path d="M2097.3 542.5500000000001 V539.1500000000001 a4.1 4.1 0 0 1 8.2 0 V542.5500000000001" fill="none" stroke="#1C5FAF" stroke-width="2.5"/><rect x="2095.1" y="541.95" width="12.6" height="10.6" rx="1" fill="#D6E6F6" stroke="#1C5FAF" stroke-width="2.5"/><rect x="2120.0" y="530.85" width="31.5" height="26.2" rx="1.5" fill="#DCDCDC" stroke="#4D4D4D" stroke-width="2.6"/><path d="M2132.2 539.0500000000001 A5 6.6 0 1 0 2132.2 549.5500000000001" fill="none" stroke="#3C9A3C" stroke-width="2"/><g stroke="#1F7A1F" stroke-width="2.4"><path d="M2139.2 537.0500000000001 V550.0500000000001 M2144.7 537.0500000000001 V550.0500000000001 M2136.0 540.7500000000001 H2148.2 M2136.0 546.35 H2148.2"/></g><path d="M2078.9 583.1 V599.6 H2062.6 Z" fill="#1E1E1E"/><path d="M2097.3 590.5 V587.1 a4.1 4.1 0 0 1 8.2 0 V590.5" fill="none" stroke="#1C5FAF" stroke-width="2.5"/><rect x="2095.1" y="589.9" width="12.6" height="10.6" rx="1" fill="#D6E6F6" stroke="#1C5FAF" stroke-width="2.5"/><rect x="2120.0" y="578.8" width="31.5" height="26.2" rx="1.5" fill="#DCDCDC" stroke="#4D4D4D" stroke-width="2.6"/><path d="M2132.2 587.0 A5 6.6 0 1 0 2132.2 597.5" fill="none" stroke="#3C9A3C" stroke-width="2"/><g stroke="#1F7A1F" stroke-width="2.4"><path d="M2139.2 585.0 V598.0 M2144.7 585.0 V598.0 M2136.0 588.7 H2148.2 M2136.0 594.3 H2148.2"/></g><path d="M2109.8999999999996 627.0500000000001 L2120.5 638.45 L2109.8999999999996 649.85 Z" fill="none" stroke="#1E1E1E" stroke-width="2.5" stroke-linejoin="miter"/><g fill="#DADADA" stroke-width="2.2"><path d="M2175.5 631.9000000000001 H2186.7000000000003 M2170.4 641.8000000000001 H2181.6" stroke="#1E1E1E"/><rect x="2167.6" y="628.85" width="6.8" height="6.2" stroke="#555"/><rect x="2187.8" y="626.0500000000001" width="11.5" height="11.7" stroke="#555"/><rect x="2162.5" y="638.85" width="6.8" height="7" stroke="#1E1E1E"/><rect x="2182.7000000000003" y="636.25" width="11.8" height="11.8" stroke="#1E1E1E" stroke-width="2.4"/></g><path d="M2109.8999999999996 675.0 L2120.5 686.4 L2109.8999999999996 697.8 Z" fill="none" stroke="#1E1E1E" stroke-width="2.5" stroke-linejoin="miter"/><path d="M2142.6 686.4 V683.0 a4.1 4.1 0 0 1 8.2 0 V686.4" fill="none" stroke="#1C5FAF" stroke-width="2.5"/><rect x="2140.3999999999996" y="685.8" width="12.6" height="10.6" rx="1" fill="#D6E6F6" stroke="#1C5FAF" stroke-width="2.5"/><path d="M2177.5 680.4 A7.6 8.2 0 1 0 2177.5 694.4" fill="none" stroke="#1F7A1F" stroke-width="3.3"/><g stroke="#1F7A1F" stroke-width="2.8"><path d="M2187.5 678.0 V693.0 M2194.5 678.0 V693.0 M2183.5 681.8 H2198.5 M2183.5 688.8 H2198.5"/></g><path d="M2109.8999999999996 722.95 L2120.5 734.35 L2109.8999999999996 745.75 Z" fill="none" stroke="#1E1E1E" stroke-width="2.5" stroke-linejoin="miter"/><path d="M2142.6 734.35 V730.95 a4.1 4.1 0 0 1 8.2 0 V734.35" fill="none" stroke="#1C5FAF" stroke-width="2.5"/><rect x="2140.3999999999996" y="733.75" width="12.6" height="10.6" rx="1" fill="#D6E6F6" stroke="#1C5FAF" stroke-width="2.5"/><path d="M2177.5 728.35 A7.6 8.2 0 1 0 2177.5 742.35" fill="none" stroke="#1F7A1F" stroke-width="3.3"/><g stroke="#1F7A1F" stroke-width="2.8"><path d="M2187.5 725.95 V740.95 M2194.5 725.95 V740.95 M2183.5 729.75 H2198.5 M2183.5 736.75 H2198.5"/></g><path d="M2109.8999999999996 770.9000000000001 L2120.5 782.3000000000001 L2109.8999999999996 793.7 Z" fill="none" stroke="#1E1E1E" stroke-width="2.5" stroke-linejoin="miter"/><path d="M2142.6 782.3000000000001 V778.9000000000001 a4.1 4.1 0 0 1 8.2 0 V782.3000000000001" fill="none" stroke="#1C5FAF" stroke-width="2.5"/><rect x="2140.3999999999996" y="781.7" width="12.6" height="10.6" rx="1" fill="#D6E6F6" stroke="#1C5FAF" stroke-width="2.5"/><path d="M2177.5 776.3000000000001 A7.6 8.2 0 1 0 2177.5 790.3000000000001" fill="none" stroke="#1F7A1F" stroke-width="3.3"/><g stroke="#1F7A1F" stroke-width="2.8"><path d="M2187.5 773.9000000000001 V788.9000000000001 M2194.5 773.9000000000001 V788.9000000000001 M2183.5 777.7 H2198.5 M2183.5 784.7 H2198.5"/></g><path d="M2078.9 822.85 V839.35 H2062.6 Z" fill="#1E1E1E"/><path d="M2097.3 830.25 V826.85 a4.1 4.1 0 0 1 8.2 0 V830.25" fill="none" stroke="#1C5FAF" stroke-width="2.5"/><rect x="2095.1" y="829.65" width="12.6" height="10.6" rx="1" fill="#D6E6F6" stroke="#1C5FAF" stroke-width="2.5"/><rect x="2120.0" y="818.55" width="31.5" height="26.2" rx="1.5" fill="#DCDCDC" stroke="#4D4D4D" stroke-width="2.6"/><path d="M2132.2 826.75 A5 6.6 0 1 0 2132.2 837.25" fill="none" stroke="#3C9A3C" stroke-width="2"/><g stroke="#1F7A1F" stroke-width="2.4"><path d="M2139.2 824.75 V837.75 M2144.7 824.75 V837.75 M2136.0 828.45 H2148.2 M2136.0 834.05 H2148.2"/></g><path d="M2109.8999999999996 866.8000000000001 L2120.5 878.2 L2109.8999999999996 889.6 Z" fill="none" stroke="#1E1E1E" stroke-width="2.5" stroke-linejoin="miter"/><g fill="#DADADA" stroke-width="2.2"><path d="M2175.5 871.6500000000001 H2186.7000000000003 M2170.4 881.5500000000001 H2181.6" stroke="#1E1E1E"/><rect x="2167.6" y="868.6" width="6.8" height="6.2" stroke="#555"/><rect x="2187.8" y="865.8000000000001" width="11.5" height="11.7" stroke="#555"/><rect x="2162.5" y="878.6" width="6.8" height="7" stroke="#1E1E1E"/><rect x="2182.7000000000003" y="876.0" width="11.8" height="11.8" stroke="#1E1E1E" stroke-width="2.4"/></g><path d="M2109.8999999999996 914.75 L2120.5 926.15 L2109.8999999999996 937.55 Z" fill="none" stroke="#1E1E1E" stroke-width="2.5" stroke-linejoin="miter"/><path d="M2142.6 926.15 V922.75 a4.1 4.1 0 0 1 8.2 0 V926.15" fill="none" stroke="#1C5FAF" stroke-width="2.5"/><rect x="2140.3999999999996" y="925.55" width="12.6" height="10.6" rx="1" fill="#D6E6F6" stroke="#1C5FAF" stroke-width="2.5"/><path d="M2177.5 920.15 A7.6 8.2 0 1 0 2177.5 934.15" fill="none" stroke="#1F7A1F" stroke-width="3.3"/><g stroke="#1F7A1F" stroke-width="2.8"><path d="M2187.5 917.75 V932.75 M2194.5 917.75 V932.75 M2183.5 921.55 H2198.5 M2183.5 928.55 H2198.5"/></g><path d="M2109.8999999999996 962.7 L2120.5 974.1 L2109.8999999999996 985.5 Z" fill="none" stroke="#1E1E1E" stroke-width="2.5" stroke-linejoin="miter"/><path d="M2142.6 974.1 V970.7 a4.1 4.1 0 0 1 8.2 0 V974.1" fill="none" stroke="#1C5FAF" stroke-width="2.5"/><rect x="2140.3999999999996" y="973.5" width="12.6" height="10.6" rx="1" fill="#D6E6F6" stroke="#1C5FAF" stroke-width="2.5"/><path d="M2177.5 968.1 A7.6 8.2 0 1 0 2177.5 982.1" fill="none" stroke="#1F7A1F" stroke-width="3.3"/><g stroke="#1F7A1F" stroke-width="2.8"><path d="M2187.5 965.7 V980.7 M2194.5 965.7 V980.7 M2183.5 969.5 H2198.5 M2183.5 976.5 H2198.5"/></g><path d="M2109.8999999999996 1010.6500000000002 L2120.5 1022.0500000000002 L2109.8999999999996 1033.4500000000003 Z" fill="none" stroke="#1E1E1E" stroke-width="2.5" stroke-linejoin="miter"/><path d="M2142.6 1022.0500000000002 V1018.6500000000002 a4.1 4.1 0 0 1 8.2 0 V1022.0500000000002" fill="none" stroke="#1C5FAF" stroke-width="2.5"/><rect x="2140.3999999999996" y="1021.4500000000002" width="12.6" height="10.6" rx="1" fill="#D6E6F6" stroke="#1C5FAF" stroke-width="2.5"/><path d="M2177.5 1016.0500000000002 A7.6 8.2 0 1 0 2177.5 1030.0500000000002" fill="none" stroke="#1F7A1F" stroke-width="3.3"/><g stroke="#1F7A1F" stroke-width="2.8"><path d="M2187.5 1013.6500000000002 V1028.65 M2194.5 1013.6500000000002 V1028.65 M2183.5 1017.4500000000002 H2198.5 M2183.5 1024.4500000000003 H2198.5"/></g><path d="M2078.9 1062.6 V1079.1 H2062.6 Z" fill="#1E1E1E"/><path d="M2097.3 1070.0 V1066.6 a4.1 4.1 0 0 1 8.2 0 V1070.0" fill="none" stroke="#1C5FAF" stroke-width="2.5"/><rect x="2095.1" y="1069.4" width="12.6" height="10.6" rx="1" fill="#D6E6F6" stroke="#1C5FAF" stroke-width="2.5"/><rect x="2120.0" y="1058.3" width="31.5" height="26.2" rx="1.5" fill="#DCDCDC" stroke="#4D4D4D" stroke-width="2.6"/><path d="M2132.2 1066.5 A5 6.6 0 1 0 2132.2 1077.0" fill="none" stroke="#3C9A3C" stroke-width="2"/><g stroke="#1F7A1F" stroke-width="2.4"><path d="M2139.2 1064.5 V1077.5 M2144.7 1064.5 V1077.5 M2136.0 1068.2 H2148.2 M2136.0 1073.8 H2148.2"/></g><path d="M2109.8999999999996 1106.55 L2120.5 1117.95 L2109.8999999999996 1129.3500000000001 Z" fill="none" stroke="#1E1E1E" stroke-width="2.5" stroke-linejoin="miter"/><g fill="#DADADA" stroke-width="2.2"><path d="M2175.5 1111.4 H2186.7000000000003 M2170.4 1121.3 H2181.6" stroke="#1E1E1E"/><rect x="2167.6" y="1108.3500000000001" width="6.8" height="6.2" stroke="#555"/><rect x="2187.8" y="1105.55" width="11.5" height="11.7" stroke="#555"/><rect x="2162.5" y="1118.3500000000001" width="6.8" height="7" stroke="#1E1E1E"/><rect x="2182.7000000000003" y="1115.75" width="11.8" height="11.8" stroke="#1E1E1E" stroke-width="2.4"/></g><path d="M2109.8999999999996 1154.5 L2120.5 1165.9 L2109.8999999999996 1177.3000000000002 Z" fill="none" stroke="#1E1E1E" stroke-width="2.5" stroke-linejoin="miter"/><path d="M2142.6 1165.9 V1162.5 a4.1 4.1 0 0 1 8.2 0 V1165.9" fill="none" stroke="#1C5FAF" stroke-width="2.5"/><rect x="2140.3999999999996" y="1165.3000000000002" width="12.6" height="10.6" rx="1" fill="#D6E6F6" stroke="#1C5FAF" stroke-width="2.5"/><path d="M2177.5 1159.9 A7.6 8.2 0 1 0 2177.5 1173.9" fill="none" stroke="#1F7A1F" stroke-width="3.3"/><g stroke="#1F7A1F" stroke-width="2.8"><path d="M2187.5 1157.5 V1172.5 M2194.5 1157.5 V1172.5 M2183.5 1161.3000000000002 H2198.5 M2183.5 1168.3000000000002 H2198.5"/></g><path d="M2109.8999999999996 1202.45 L2120.5 1213.8500000000001 L2109.8999999999996 1225.2500000000002 Z" fill="none" stroke="#1E1E1E" stroke-width="2.5" stroke-linejoin="miter"/><path d="M2142.6 1213.8500000000001 V1210.45 a4.1 4.1 0 0 1 8.2 0 V1213.8500000000001" fill="none" stroke="#1C5FAF" stroke-width="2.5"/><rect x="2140.3999999999996" y="1213.2500000000002" width="12.6" height="10.6" rx="1" fill="#D6E6F6" stroke="#1C5FAF" stroke-width="2.5"/><path d="M2177.5 1207.8500000000001 A7.6 8.2 0 1 0 2177.5 1221.8500000000001" fill="none" stroke="#1F7A1F" stroke-width="3.3"/><g stroke="#1F7A1F" stroke-width="2.8"><path d="M2187.5 1205.45 V1220.45 M2194.5 1205.45 V1220.45 M2183.5 1209.2500000000002 H2198.5 M2183.5 1216.2500000000002 H2198.5"/></g><path d="M2109.8999999999996 1250.4 L2120.5 1261.8000000000002 L2109.8999999999996 1273.2000000000003 Z" fill="none" stroke="#1E1E1E" stroke-width="2.5" stroke-linejoin="miter"/><path d="M2142.6 1261.8000000000002 V1258.4 a4.1 4.1 0 0 1 8.2 0 V1261.8000000000002" fill="none" stroke="#1C5FAF" stroke-width="2.5"/><rect x="2140.3999999999996" y="1261.2000000000003" width="12.6" height="10.6" rx="1" fill="#D6E6F6" stroke="#1C5FAF" stroke-width="2.5"/><path d="M2177.5 1255.8000000000002 A7.6 8.2 0 1 0 2177.5 1269.8000000000002" fill="none" stroke="#1F7A1F" stroke-width="3.3"/><g stroke="#1F7A1F" stroke-width="2.8"><path d="M2187.5 1253.4 V1268.4 M2194.5 1253.4 V1268.4 M2183.5 1257.2000000000003 H2198.5 M2183.5 1264.2000000000003 H2198.5"/></g><rect x="2040.4" y="1729.4" width="55.2" height="51.8" fill="#F3F3F6" stroke="#4A8AC8" stroke-width="2"/><rect x="2051.2" y="1738.4" width="11.5" height="11.5" fill="#2A2A2A"/><rect x="2051.2" y="1761.1" width="11.5" height="11.6" fill="#2A2A2A"/><g stroke="#FFF" stroke-width="2"><path d="M2053.5 1744.1 H2060.4 M2056.9 1740.7 V1747.6 M2053.5 1766.9 H2060.4 M2056.9 1763.4 V1770.4"/></g><g stroke="#2A2A2A" stroke-width="2.4"><path d="M2066.3 1739.2 H2078 M2066.3 1744 H2078 M2066.3 1749.1 H2078 M2066.3 1753.9 H2078 M2066.3 1759.1 H2078 M2066.3 1766.3 H2078 M2066.3 1771.9 H2078 M2081.9 1744 H2085.9 M2081.9 1749.1 H2085.9 M2081.9 1753.9 H2085.9 M2081.9 1759.1 H2085.9 M2082.5 1771.9 H2085.9"/></g><rect x="2108.2" y="1737.2" width="19.6" height="19.5" fill="#2A2A2A"/><path d="M2111.3 1754.6 L2118 1740 L2124.7 1754.6 M2113.6 1749.8 H2122.4" fill="none" stroke="#FFF" stroke-width="2.6"/><path d="M2110.5 1760.5 H2126 L2111.5 1772.2 H2126.6" fill="none" stroke="#2A2A2A" stroke-width="3.2"/><path d="M2137.4 1745.5 V1765" stroke="#0B50D0" stroke-width="3"/><path d="M2131 1756.5 L2137.4 1766.5 L2143.8 1756.5" fill="none" stroke="#0B50D0" stroke-width="3"/><rect x="2157.1" y="1728" width="2" height="55" fill="#D4D5DE"/><path d="M2176.5 1769 L2192 1753.5" stroke="#A0A0A0" stroke-width="6.5" stroke-linecap="round"/><circle cx="2197" cy="1748.5" r="10.2" fill="#A0A0A0"/><path d="M2199.5 1736.5 L2209.5 1746.5 L2203.5 1752.5 L2193.5 1742.5 Z" fill="#EEEEF2"/></svg></body></html>
